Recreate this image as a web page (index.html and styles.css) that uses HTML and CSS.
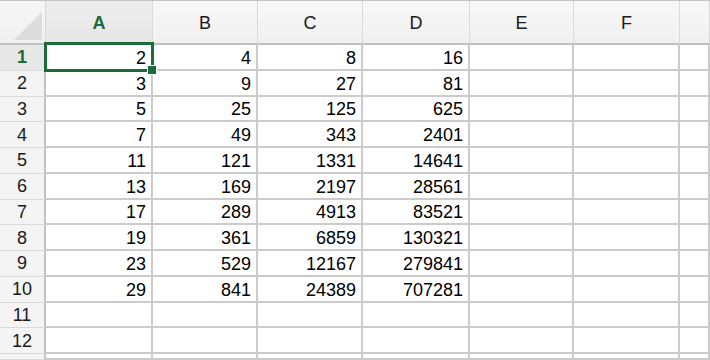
FILE: index.html
```html
<!DOCTYPE html>
<html>
<head>
<meta charset="utf-8">
<link rel="stylesheet" href="styles.css">
</head>
<body>
<div class="sheet">
  <div class="corner"><svg width="46" height="42" viewBox="0 0 46 42"><polygon points="14,39 42,11 42,39" fill="#dcdcdc"/></svg></div>
  <div class="ch sel">A</div><div class="ch">B</div><div class="ch">C</div><div class="ch">D</div><div class="ch">E</div><div class="ch">F</div><div class="ch"></div>

  <div class="rh sel">1</div><div class="c a1">2<span class="handle"></span></div><div class="c">4</div><div class="c">8</div><div class="c">16</div><div class="c"></div><div class="c"></div><div class="c"></div>
  <div class="rh">2</div><div class="c">3</div><div class="c">9</div><div class="c">27</div><div class="c">81</div><div class="c"></div><div class="c"></div><div class="c"></div>
  <div class="rh">3</div><div class="c">5</div><div class="c">25</div><div class="c">125</div><div class="c">625</div><div class="c"></div><div class="c"></div><div class="c"></div>
  <div class="rh">4</div><div class="c">7</div><div class="c">49</div><div class="c">343</div><div class="c">2401</div><div class="c"></div><div class="c"></div><div class="c"></div>
  <div class="rh">5</div><div class="c">11</div><div class="c">121</div><div class="c">1331</div><div class="c">14641</div><div class="c"></div><div class="c"></div><div class="c"></div>
  <div class="rh">6</div><div class="c">13</div><div class="c">169</div><div class="c">2197</div><div class="c">28561</div><div class="c"></div><div class="c"></div><div class="c"></div>
  <div class="rh">7</div><div class="c">17</div><div class="c">289</div><div class="c">4913</div><div class="c">83521</div><div class="c"></div><div class="c"></div><div class="c"></div>
  <div class="rh">8</div><div class="c">19</div><div class="c">361</div><div class="c">6859</div><div class="c">130321</div><div class="c"></div><div class="c"></div><div class="c"></div>
  <div class="rh">9</div><div class="c">23</div><div class="c">529</div><div class="c">12167</div><div class="c">279841</div><div class="c"></div><div class="c"></div><div class="c"></div>
  <div class="rh">10</div><div class="c">29</div><div class="c">841</div><div class="c">24389</div><div class="c">707281</div><div class="c"></div><div class="c"></div><div class="c"></div>
  <div class="rh">11</div><div class="c"></div><div class="c"></div><div class="c"></div><div class="c"></div><div class="c"></div><div class="c"></div><div class="c"></div>
  <div class="rh">12</div><div class="c"></div><div class="c"></div><div class="c"></div><div class="c"></div><div class="c"></div><div class="c"></div><div class="c"></div>
  <div class="rh"></div><div class="c"></div><div class="c"></div><div class="c"></div><div class="c"></div><div class="c"></div><div class="c"></div><div class="c"></div>
</div>
</body>
</html>
```
FILE: styles.css
```css
html, body {
  margin: 0;
  padding: 0;
  background: #fff;
  overflow: hidden;
}
.sheet {
  width: 710px;
  height: 360px;
  display: grid;
  grid-template-columns: 46px 107px 105px 105px 107px 104px 106px 1fr;
  grid-template-rows: 44px repeat(12, 25.75px) 1fr;
  border-top: 1px solid #c4c4c4;
  box-sizing: border-box;
  font-family: "Liberation Sans", Arial, sans-serif;
  font-size: 18px;
  color: #000;
}
.sheet > div {
  box-sizing: border-box;
}
.corner {
  background: linear-gradient(#f6f6f6, #f0f0f0);
  border-right: 1px solid #d6d6d6;
  border-bottom: 2px solid #c0c0c0;
  overflow: hidden;
}
.corner svg {
  display: block;
}
.ch {
  background: linear-gradient(#f8f8f8, #f0f0f0);
  border-right: 1px solid #dadada;
  border-bottom: 2px solid #c0c0c0;
  display: flex;
  align-items: center;
  justify-content: center;
  padding-top: 3px;
  color: #1a1a1a;
}
.ch.sel {
  background: linear-gradient(#eeeeee, #e6e6e6);
  color: #1d6b38;
  font-weight: bold;
}
.rh {
  background: #f4f4f4;
  border-right: 2px solid #c2c2c2;
  border-bottom: 1px solid #dadada;
  display: flex;
  align-items: center;
  justify-content: center;
  padding-top: 1px;
  color: #1a1a1a;
}
.rh.sel {
  background: #e8e8e8;
  color: #1d6b38;
  font-weight: bold;
}
.c {
  border-right: 2px solid #cbcbcb;
  border-bottom: 2px solid #cbcbcb;
  display: flex;
  align-items: center;
  justify-content: flex-end;
  padding: 2px 5px 0 0;
  line-height: 1;
}
.a1 {
  position: relative;
}
.a1::after {
  content: "";
  position: absolute;
  left: -2px;
  top: -3px;
  right: -3px;
  bottom: -3px;
  border: 3px solid #1d6b38;
  pointer-events: none;
}
.handle {
  position: absolute;
  right: -6px;
  bottom: -6px;
  width: 8px;
  height: 8px;
  background: #1d6b38;
  border: 1px solid #fff;
  z-index: 2;
}
```
